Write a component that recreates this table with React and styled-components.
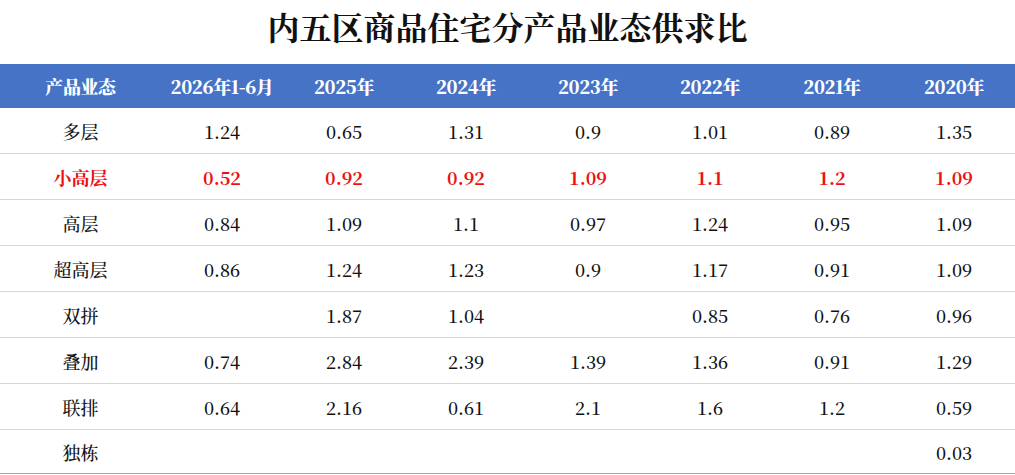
import React from "react";
import styled, { createGlobalStyle } from "styled-components";

const Global = createGlobalStyle`
  html, body { margin: 0; padding: 0; background: #ffffff; }
  body { font-family: "Noto Serif CJK SC", "Liberation Serif", "Noto Sans CJK SC", serif; }
`;

const Page = styled.div`
  width: 1015px;
  height: 475px;
  overflow: hidden;
  background: #fff;
`;

const Title = styled.h1`
  margin: 0;
  height: 64px;
  box-sizing: border-box;
  padding-top: 6px;
  line-height: 40px;
  text-align: center;
  font-family: "Noto Serif CJK SC", "Noto Sans CJK SC", serif;
  font-size: 32px;
  font-weight: 700;
  color: #111;
`;

const Grid = styled.div`
  display: grid;
  grid-template-columns: 161px repeat(7, 122px);
`;

const Row = styled.div`
  display: contents;
`;

const HeadCell = styled.div`
  height: 44px;
  background: #4673c6;
  color: #fff;
  display: flex;
  align-items: center;
  justify-content: center;
  font-family: "Noto Serif CJK SC", "Liberation Serif", serif;
  font-weight: 900;
  font-size: 18px;
  letter-spacing: -0.4px;
  box-sizing: border-box;
`;

const Cell = styled.div`
  height: ${(p) => (p.$last ? "44px" : "46px")};
  box-sizing: border-box;
  border-bottom: 1px solid ${(p) => (p.$last ? "#9aa7bd" : "#cfd7ea")};
  display: flex;
  align-items: center;
  justify-content: center;
  font-family: "Noto Serif CJK SC", "Liberation Serif", serif;
  font-size: 18px;
  font-weight: ${(p) => (p.$hl ? 700 : 500)};
  color: ${(p) => (p.$hl ? "#ee1111" : "#111")};
`;

const headers = ["产品业态", "2026年1-6月", "2025年", "2024年", "2023年", "2022年", "2021年", "2020年"];

const rows = [
  { name: "多层", v: ["1.24", "0.65", "1.31", "0.9", "1.01", "0.89", "1.35"] },
  { name: "小高层", hl: true, v: ["0.52", "0.92", "0.92", "1.09", "1.1", "1.2", "1.09"] },
  { name: "高层", v: ["0.84", "1.09", "1.1", "0.97", "1.24", "0.95", "1.09"] },
  { name: "超高层", v: ["0.86", "1.24", "1.23", "0.9", "1.17", "0.91", "1.09"] },
  { name: "双拼", v: ["", "1.87", "1.04", "", "0.85", "0.76", "0.96"] },
  { name: "叠加", v: ["0.74", "2.84", "2.39", "1.39", "1.36", "0.91", "1.29"] },
  { name: "联排", v: ["0.64", "2.16", "0.61", "2.1", "1.6", "1.2", "0.59"] },
  { name: "独栋", v: ["", "", "", "", "", "", "0.03"] },
];

export default function App() {
  return (
    <Page>
      <Global />
      <Title>内五区商品住宅分产品业态供求比</Title>
      <Grid>
        <Row>
          {headers.map((h) => (
            <HeadCell key={h}>{h}</HeadCell>
          ))}
        </Row>
        {rows.map((r, i) => (
          <Row key={r.name}>
            <Cell $hl={r.hl} $last={i === rows.length - 1}>{r.name}</Cell>
            {r.v.map((v, j) => (
              <Cell key={j} $hl={r.hl} $last={i === rows.length - 1}>{v}</Cell>
            ))}
          </Row>
        ))}
      </Grid>
    </Page>
  );
}
